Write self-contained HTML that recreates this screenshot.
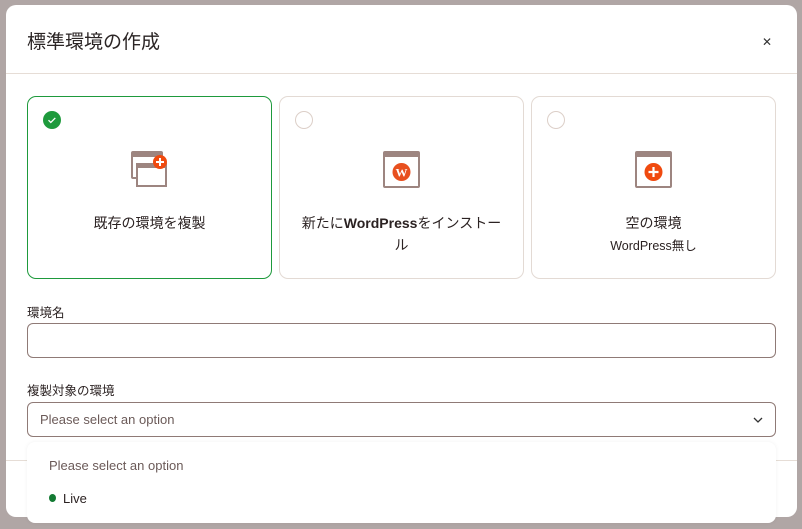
<!DOCTYPE html>
<html><head><meta charset="utf-8"><style>
*{box-sizing:border-box;margin:0;padding:0}
body{width:802px;height:529px;overflow:hidden;background:#b0a6a5;font-family:"Liberation Sans","Noto Sans CJK JP",sans-serif;position:relative;color:#2b2222}
.modal{position:absolute;left:6px;top:5px;width:791px;height:512px;background:#fff;border-radius:10px}
.title{position:absolute;left:21px;top:22px;font-size:19px;color:#2b2525}
.close{position:absolute;left:756px;top:30px;font-size:12px;color:#333}
.hr{position:absolute;left:0;right:0;height:1px;background:#e6ddd6}
.card{position:absolute;top:91px;width:245px;height:183px;border:1px solid #e3dad4;border-radius:9px;text-align:center}
.card.sel{border-color:#1e9a3c}
.radio{position:absolute;left:15px;top:14px;width:18px;height:18px;border-radius:50%;border:1px solid #dccfc8}
.sel .radio{background:#1e9a3c;border:none}
.icon{position:absolute;left:103px;top:54px}
.lbl{position:absolute;left:0;right:0;font-size:14px;color:#2b2222;line-height:22px}
.label{position:absolute;left:21px;font-size:12.5px;color:#2b2222}
.input{position:absolute;left:21px;width:749px;height:35px;border:1px solid #8f7a76;border-radius:6px}
.ph{position:absolute;left:12px;top:9px;font-size:13px;color:#6b5a58}
.dd{position:absolute;left:27px;top:442px;width:749px;height:81px;background:#fff;border-radius:8px;box-shadow:0 0 4px rgba(0,0,0,.06)}
</style></head><body>
<div class="modal">
<div class="title">標準環境の作成</div>
<div class="close">✕</div>
<div class="hr" style="top:68px"></div>
<div class="card sel" style="left:21px"><div class="radio"><svg width="18" height="18"><path d="M5.5 9.2l2.3 2.3 4.5-4.6" stroke="#fff" stroke-width="1.3" fill="none"/></svg></div>
<svg class="icon" width="40" height="40" viewBox="0 0 40 40"><rect x="1" y="1" width="30" height="26" rx="1" fill="none" stroke="#9d8580" stroke-width="2"/><rect x="1" y="1" width="30" height="5" fill="#9d8580"/><rect x="6" y="13" width="29" height="22" fill="#fff" stroke="#9d8580" stroke-width="2"/><rect x="6" y="13" width="29" height="4" fill="#9d8580"/><circle cx="29" cy="11" r="7" fill="#f04a0f"/><path d="M29 7v8M25 11h8" stroke="#fff" stroke-width="2"/></svg>
<div class="lbl" style="top:115px">既存の環境を複製</div></div>
<div class="card" style="left:273px"><div class="radio"></div>
<svg class="icon" width="40" height="40" viewBox="0 0 40 40"><rect x="1" y="1" width="35" height="35" rx="1" fill="none" stroke="#9d8580" stroke-width="2"/><rect x="1" y="1" width="35" height="5" fill="#9d8580"/><circle cx="18.5" cy="21" r="9" fill="#e8501f"/><text x="18.5" y="25.5" font-size="12" font-family="Liberation Serif" font-weight="bold" fill="#fff" text-anchor="middle">W</text></svg>
<div class="lbl" style="top:115px">新たに<b>WordPress</b>をインストー<br>ル</div></div>
<div class="card" style="left:525px"><div class="radio"></div>
<svg class="icon" width="40" height="40" viewBox="0 0 40 40"><rect x="1" y="1" width="35" height="35" rx="1" fill="none" stroke="#9d8580" stroke-width="2"/><rect x="1" y="1" width="35" height="5" fill="#9d8580"/><circle cx="18.5" cy="21" r="9" fill="#f04a0f"/><path d="M18.5 16v10M13.5 21h10" stroke="#fff" stroke-width="2.2"/></svg>
<div class="lbl" style="top:115px">空の環境</div><div class="lbl" style="top:138px;font-size:12.5px">WordPress無し</div></div>
<div class="label" style="top:297px">環境名</div>
<div class="input" style="top:318px"></div>
<div class="label" style="top:375px">複製対象の環境</div>
<div class="input" style="top:397px"><div class="ph">Please select an option</div><svg style="position:absolute;right:12px;top:13px" width="10" height="8"><path d="M1 2l4 4 4-4" stroke="#333" stroke-width="1.3" fill="none"/></svg></div>
<div class="hr" style="top:455px"></div>
</div>
<div class="dd">
<div style="position:absolute;left:22px;top:16px;font-size:13px;color:#6b5a58">Please select an option</div>
<div style="position:absolute;left:22px;top:52px;width:7px;height:8px;border-radius:50%;background:#137a33"></div>
<div style="position:absolute;left:36px;top:49px;font-size:13px;color:#2b2222">Live</div>
</div>
</body></html>
